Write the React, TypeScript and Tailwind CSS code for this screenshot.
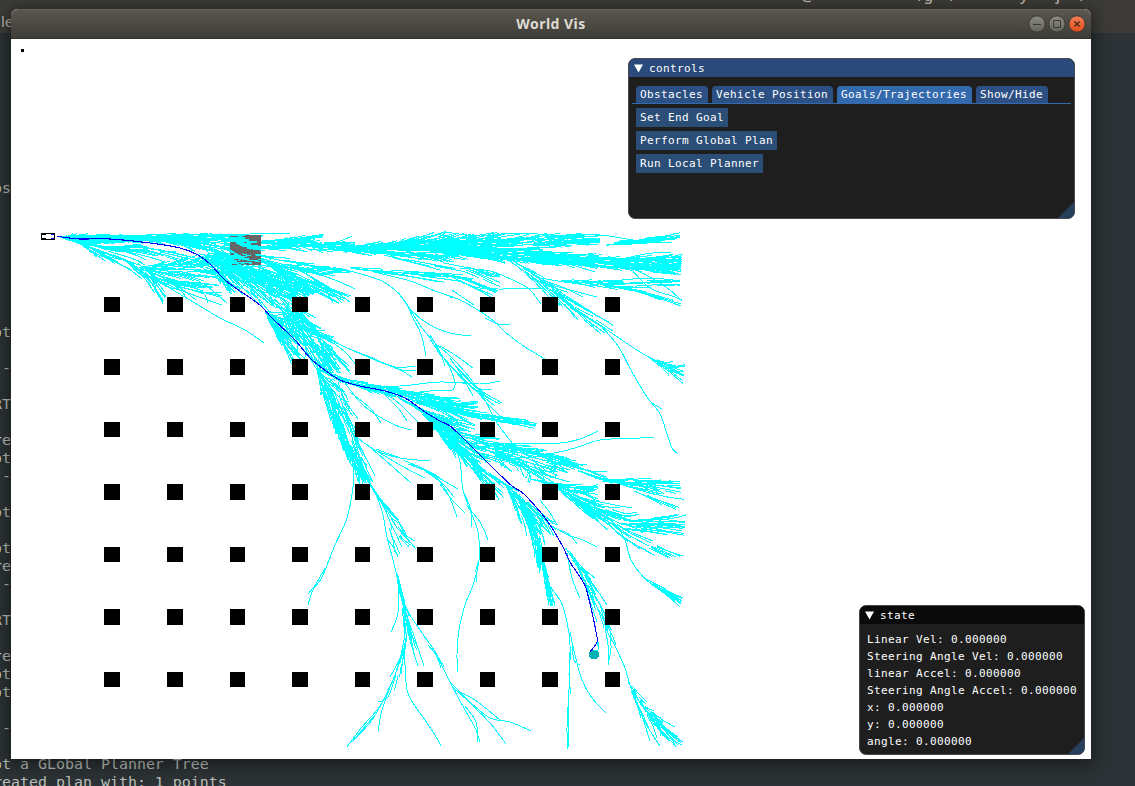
import React from "react";

type Pt = [number, number];

function parse(s: string): Pt[] {
  return s.split(" ").map((p) => p.split(",").map(Number) as Pt);
}

function smooth(p: Pt[]): string {
  let d = `M${p[0][0]} ${p[0][1]}`;
  for (let i = 0; i < p.length - 1; i++) {
    const a = p[i - 1] || p[i];
    const b = p[i];
    const c = p[i + 1];
    const e = p[i + 2] || c;
    d += `C${(b[0] + (c[0] - a[0]) / 6).toFixed(1)} ${(b[1] + (c[1] - a[1]) / 6).toFixed(1)} ${(c[0] - (e[0] - b[0]) / 6).toFixed(1)} ${(c[1] - (e[1] - b[1]) / 6).toFixed(1)} ${c[0]} ${c[1]}`;
  }
  return d;
}

function at(p: Pt[], t: number): Pt {
  const k = Math.min(0.9999, Math.max(0, t)) * (p.length - 1);
  const i = Math.floor(k);
  const f = k - i;
  return [p[i][0] + (p[i + 1][0] - p[i][0]) * f, p[i][1] + (p[i + 1][1] - p[i][1]) * f];
}

let seed = 7;
function rnd() {
  seed = (seed * 1103515245 + 12345) % 2147483648;
  return seed / 2147483648;
}

// Twigs that grow forward and outward between two boundary lines.
function spray(upper: string, lower: string, n: number, len: number): string {
  const u = parse(upper);
  const l = parse(lower);
  const pos = (t: number, v: number): Pt => {
    const a = at(u, t);
    const b = at(l, t);
    return [a[0] + (b[0] - a[0]) * v, a[1] + (b[1] - a[1]) * v];
  };
  let d = "";
  for (let i = 0; i < n; i++) {
    const t0 = rnd() * (1 - len * 0.4);
    const t1 = Math.min(1, t0 + len * (0.3 + rnd() * 0.9));
    const v0 = 0.15 + rnd() * 0.7;
    const v1 = Math.min(1.06, Math.max(-0.06, 0.5 + (v0 - 0.5) * 1.8 + (rnd() - 0.5) * 0.5));
    const a = pos(t0, v0);
    const m = pos((t0 + t1) / 2, v0 + (v1 - v0) * 0.35);
    const b = pos(t1, v1);
    d += `M${a[0].toFixed(1)} ${a[1].toFixed(1)}L${m[0].toFixed(1)} ${m[1].toFixed(1)}L${b[0].toFixed(1)} ${b[1].toFixed(1)}`;
  }
  return d;
}

// Curves that leave one root through a shared control point.
function fan(root: string, ctrl: string, ends: string): string {
  return parse(ends)
    .map((e) => `M${root}Q${ctrl} ${e[0]},${e[1]}`)
    .join("");
}

const SPRAYS: [string, string, number, number][] = [
  ["60,237 75,234 120,235 180,234 230,235 262,237", "60,238 85,246 120,242 160,243 200,251 240,262", 200, 0.22],
  ["75,239 105,246 140,244 180,252 215,262", "80,242 110,252 145,252 180,262 222,272", 24, 0.3],
  ["74,239 100,246 135,258 155,274 166,296", "74,240 95,256 125,268 145,280 163,303", 40, 0.3],
  ["135,267 170,262 205,254 235,256", "137,270 170,276 200,280 230,275", 75, 0.35],
  ["140,268 175,278 200,281 222,287", "145,275 160,290 190,297 222,301", 15, 0.5],
  ["205,250 245,256 290,266 320,291", "205,260 225,276 262,295 300,300", 100, 0.35],
  ["205,250 250,262 290,278 320,291", "205,256 240,272 270,285 298,292", 34, 0.4],
  ["198,252 240,262 265,274 292,290 322,328", "205,260 228,284 260,303 280,318 300,345", 130, 0.22],
  ["212,268 222,276 240,290", "208,268 220,284 232,294", 20, 0.6],
  ["262,308 290,316 330,334 354,374", "266,314 280,336 300,352 322,372", 92, 0.3],
  ["290,300 306,316 324,342 338,370", "280,304 292,328 306,350 322,374", 50, 0.3],
  ["268,316 285,335 305,360", "266,316 278,340 292,364", 32, 0.5],
  ["230,240 290,239 320,241 355,242", "235,250 290,250 320,252 355,252", 95, 0.25],
  ["262,247 285,238 325,233", "262,249 295,246 322,239", 20, 0.7],
  ["240,250 285,258 320,266 350,270", "240,254 285,270 320,276 350,274", 42, 0.35],
  ["265,262 300,274 350,296", "262,262 296,284 340,303", 28, 0.5],
  ["335,246 380,242 440,235 505,234", "335,250 380,256 440,260 505,262", 185, 0.2],
  ["340,248 385,246 430,234 447,232", "340,250 385,250 435,248 460,244", 34, 0.4],
  ["440,235 510,235 560,234 600,237", "440,256 510,254 560,247 600,244", 66, 0.24],
  ["430,245 520,250 600,257 681,258", "430,254 520,262 600,268 681,274", 210, 0.16],
  ["520,250 580,253 630,257 682,255", "520,260 580,264 630,270 682,270", 80, 0.22],
  ["440,240 500,240 560,234 600,236", "440,243 500,242 560,240 600,243", 25, 0.3],
  ["600,242 640,239 680,233", "600,246 640,244 680,238", 16, 0.5],
  ["530,240 560,234 590,234", "530,248 560,246 590,244", 18, 0.5],
  ["350,266 400,270 460,274 498,291", "350,270 400,276 460,284 492,297", 26, 0.35],
  ["380,252 430,258 470,266 500,276", "380,256 430,268 470,276 500,294", 18, 0.4],
  ["560,280 610,280 680,279", "560,282 615,290 680,285", 36, 0.3],
  ["600,282 640,290 681,303", "600,286 640,294 680,308", 14, 0.6],
  ["505,256 540,275 575,298 618,330", "505,258 535,284 565,310 600,334", 38, 0.25],
  ["645,354 685,366", "648,358 682,390", 14, 0.9],
  ["318,366 345,378 385,385 420,393 460,398", "318,370 345,384 380,395 415,402 440,408", 80, 0.25],
  ["400,390 450,406 490,414 537,422", "400,396 450,412 490,421 535,428", 58, 0.3],
  ["410,398 440,400 478,403", "410,402 440,411 475,430", 34, 0.6],
  ["395,395 430,412 476,424", "395,397 430,418 474,432", 38, 0.4],
  ["314,366 342,385 350,410 362,450 372,482", "318,370 322,398 336,430 350,462 360,484", 84, 0.25],
  ["316,366 330,392 344,430 352,460", "316,368 322,396 335,430 350,464", 52, 0.3],
  ["350,440 360,462 369,480", "346,440 354,465 362,482", 34, 0.5],
  ["420,406 455,428 490,438 540,450 585,466", "420,414 440,438 470,460 510,468 535,484", 150, 0.22],
  ["424,410 455,436 480,462 518,492", "424,412 440,438 462,460 500,500", 72, 0.28],
  ["432,424 455,440 475,462", "432,424 447,448 461,470", 14, 0.6],
  ["500,443 535,446 565,458 612,480", "500,450 535,456 565,470 612,483", 44, 0.22],
  ["600,479 640,479 680,482", "600,482 640,488 682,496", 44, 0.4],
  ["615,482 650,488 684,498", "615,484 645,498 682,511", 9, 0.7],
  ["530,478 560,483 598,485", "530,480 565,490 598,500", 36, 0.4],
  ["550,482 590,498 630,513 686,516", "552,486 590,516 620,532 684,534", 92, 0.22],
  ["560,490 600,510 625,528 682,556", "562,494 600,524 630,544 662,558", 26, 0.3],
  ["645,578 683,597", "645,580 680,606", 14, 0.8],
  ["506,482 528,506 543,530 543,552", "506,488 518,515 532,545 540,572", 98, 0.25],
  ["536,530 544,560 555,606", "534,535 542,566 549,606", 26, 0.5],
  ["515,488 535,512 557,528", "515,492 525,516 543,548", 22, 0.45],
  ["526,500 545,515 558,526", "526,502 540,520 552,540", 14, 0.6],
  ["565,545 585,568 600,600 612,630", "565,548 582,578 594,605 605,630", 30, 0.3],
  ["383,500 398,520 414,542", "381,505 386,530 398,556", 10, 0.6],
  ["397,570 404,600 414,625 416,650", "396,575 401,605 405,635 404,650", 22, 0.35],
  ["405,645 402,670 396,690", "405,645 396,670 388,690", 8, 0.5],
  ["628,680 650,705 678,726", "628,685 640,715 650,742", 14, 0.4],
  ["640,700 662,722 682,742", "640,704 656,728 676,747", 32, 0.4],
  ["430,338 442,352 468,384 500,404", "430,340 440,358 468,386 494,406", 8, 0.4],
  ["375,448 400,458 428,470 460,490", "375,450 398,462 426,472 456,488", 6, 0.4],
];

const LINES: string[] = [
  "145,270 170,288 195,303 220,318 245,330 264,343",
  "150,276 180,290 222,305",
  "165,277 200,290 208,303",
  "205,284 214,292 227,303",
  "235,258 260,262 284,268",
  "210,235 250,234 290,234",
  "320,245 340,241 352,236",
  "270,264 310,272 335,280 355,289",
  "350,271 380,280 395,290 406,303 413,318 421,334 426,356",
  "398,292 412,311 430,325 450,333 471,336",
  "406,303 422,328 435,343 450,356 470,378 485,400 497,423 513,444",
  "440,346 458,357 473,368",
  "430,335 440,352 445,366",
  "435,345 450,368 455,383 454,388",
  "450,358 462,376 473,396",
  "456,366 470,382 485,395",
  "460,370 478,388 491,389",
  "462,374 480,390 502,403",
  "478,393 490,406 502,418",
  "374,272 410,281 435,291 460,300 490,318 505,332 525,347 545,359",
  "485,318 498,324 510,325",
  "432,290 452,297 450,298",
  "450,276 475,287 498,289 545,288",
  "460,268 490,271 515,281 530,290 541,304",
  "452,290 474,305",
  "445,232 480,236 520,233 560,236",
  "560,236 600,235 650,242 680,236",
  "505,258 540,282 570,305 600,325 640,352 683,376",
  "540,280 560,286 583,297",
  "548,284 570,290 597,297",
  "600,325 618,346 632,372 647,397 660,414 667,434 672,448 678,454",
  "652,403 662,409",
  "540,278 575,283 610,281 650,278 679,281",
  "600,262 635,270 655,280 670,290 682,301",
  "630,268 650,288 672,296 682,300",
  "610,262 645,254 671,252",
  "320,334 345,347 370,357 395,367 415,366",
  "345,347 375,360 400,370 412,377",
  "385,364 402,370 416,371",
  "320,334 345,352 363,374",
  "322,340 340,360 350,371",
  "328,375 360,385 400,386 440,382 480,384 500,381",
  "360,386 400,393 430,391 452,390 456,383 467,382",
  "345,383 360,402 375,414 395,425 411,430",
  "350,392 370,408 381,423",
  "338,382 345,400 358,419",
  "375,390 395,400 418,422",
  "380,390 398,408 407,421",
  "354,435 375,450 400,458 430,461",
  "350,430 362,450 375,476",
  "365,443 385,460 411,483",
  "375,450 400,465 425,478",
  "425,471 440,482 449,496 457,517",
  "430,472 445,486 454,497",
  "440,484 453,501 465,513",
  "354,465 353,487 347,518 335,545 322,577 313,590 308,605",
  "325,568 316,584 308,594",
  "367,480 377,497 383,515 387,537 393,560 397,577 399,590 403,605 405,625",
  "376,494 395,516 405,535 416,549",
  "385,510 396,518 406,534",
  "388,540 394,548 398,557",
  "398,577 398,612 391,632",
  "403,605 420,630 435,652 450,682 465,710 475,728 480,742",
  "404,610 414,636 424,666",
  "407,615 412,635 417,646",
  "405,615 410,640 418,666",
  "428,645 436,655 441,668",
  "424,636 434,650 444,667",
  "450,682 470,702 490,718 510,722 531,731",
  "455,690 475,700 500,720",
  "452,686 472,705 490,723 506,744",
  "465,706 476,722 478,742",
  "404,610 405,640 405,665 407,690 413,703 425,720 435,735 441,746",
  "404,640 400,658 390,677",
  "402,655 393,680 380,706 362,727 347,747",
  "396,675 388,697 378,702",
  "392,682 382,710 378,731",
  "385,697 372,720 354,740",
  "375,715 362,730 352,742",
  "453,440 460,462 463,490 470,510 478,532 479,560 473,585 465,605 459,630 457,655 458,672",
  "464,493 471,510 472,527",
  "466,505 480,522 488,540",
  "479,560 476,570 477,582",
  "445,430 463,452 478,470",
  "472,443 515,444 560,443 580,439 598,431",
  "495,451 545,454 575,448 600,440 640,438 654,437",
  "500,445 530,452 546,450",
  "490,452 520,463 545,471 557,472",
  "540,453 570,466 590,471 607,472",
  "595,478 620,480 651,478",
  "560,490 590,503 615,524 625,540 632,562 650,583 680,602",
  "600,512 615,530 640,549",
  "590,500 620,506 632,508",
  "545,582 560,600 567,622 570,645 569,690 568,749",
  "545,575 550,586 560,600",
  "570,632 575,655 582,680 592,698 606,713",
  "572,645 574,660 580,665",
  "571,650 569,675 571,694",
  "569,690 567,728 568,749",
  "550,525 568,535 583,540 597,547",
  "560,530 570,535 577,544",
  "540,500 550,513 557,525",
  "567,553 572,578 580,598",
  "572,560 590,580 607,605",
  "570,555 585,570 595,578",
  "585,583 591,604 597,622",
  "597,642 598,650 591,653",
  "588,585 600,605 606,628 616,648 625,668 632,690 647,712 664,734 682,745",
  "605,628 608,645 609,665",
  "610,632 611,648 608,665",
  "607,625 612,635 616,645",
  "628,680 640,710 650,741",
  "632,690 645,722 660,746",
];

const FANS: [string, string, string][] = [
  ["86,245", "130,250", "136,255 157,256 146,260 165,262"],
  ["74,240", "105,255", "115,264 118,262 132,271"],
  ["150,272", "175,282", "186,297 196,300 203,291 212,288"],
  ["295,268", "325,283", "333,303 342,303 350,302 338,298 329,290"],
  ["440,244", "520,247", "545,262 560,266 575,268 595,272"],
  ["620,240", "650,244", "676,233 680,237 672,242"],
  ["368,480", "390,515", "392,530 396,526 399,522"],
  ["524,466", "545,476", "560,487 552,494 570,482"],
];

const TREE =
  SPRAYS.map(([u, l, n, len]) => spray(u, l, n, len)).join("") +
  LINES.map((s) => smooth(parse(s))).join("") +
  FANS.map(([r, c, e]) => fan(r, c, e)).join("");

const PLAN = smooth(
  parse(
    "57,236 62,237 80,239 110,239 150,243 180,248 198,255 210,264 225,280 240,291 260,305 272,318 295,340 310,358 322,368 340,380 360,386 385,391 405,398 425,412 440,421 450,426 462,437 478,453 495,470 512,486 525,495 548,522 563,547 570,562 580,577 586,588 591,608 596,632 597,642 590,652"
  )
);

const COLS = [
  [104, 16], [167, 16], [230, 15], [292, 16], [355, 15], [417, 16], [480, 15], [542, 16], [605, 15],
];
const ROWS = [
  [297, 15], [359, 16], [422, 15], [484, 16], [547, 15], [609, 16], [672, 15],
];

function World() {
  return (
    <svg className="block h-[720px] w-[1080px]" viewBox="11 39 1080 720" shapeRendering="crispEdges">
      <rect x="21" y="49" width="3" height="3" fill="#000" />
      <rect x="230" y="235" width="31" height="30" fill="#666" />
      <path d={TREE} fill="none" stroke="#00ffff" strokeWidth="1" />
      <path
        d="M230 243h5l8 4 8 3 9 2v2h-16l-6-2-8-2zM245 235h16v8h-4v-2h-8v-2h-4zM250 243h11v2h-7zM246 256h15v3h-11zM230 236h8v1h-8zM237 261h6v1h-6zM232 264h5v1h-5zM252 262h9v2h-9z"
        fill="#666"
      />
      {ROWS.map(([y, h]) =>
        COLS.map(([x, w]) => <rect key={`${x}-${y}`} x={x} y={y} width={w} height={h} fill="#000" />)
      )}
      <circle cx="594" cy="654.5" r="5" fill="#00afaf" />
      <path d="M594 651l4-1v-8" fill="none" stroke="#00ffff" />
      <path d={PLAN} fill="none" stroke="#0000ff" strokeWidth="1.1" />
      <path d="M41 233h14v7h-14zM42 234v5h12v-5z" fill="#000" fillRule="evenodd" />
      <path d="M42 234h4v1h-4zM42 238h4v1h-4z" fill="#000" />
      <path d="M51 234h3v1h-3zM51 238h3v1h-3z" fill="#00f" />
    </svg>
  );
}

function PanelTitle({ text, className }: { text: string; className: string }) {
  return (
    <div className={`flex h-[18px] shrink-0 items-center gap-[6px] pl-[5px] ${className}`}>
      <svg className="h-[9px] w-[9px]" viewBox="0 0 9 9">
        <path d="M0 0.5h9L4.5 8.5z" fill="#fff" />
      </svg>
      <span>{text}</span>
    </div>
  );
}

function Grip() {
  return (
    <svg className="absolute right-0 bottom-0 h-4 w-4" viewBox="0 0 16 16">
      <path d="M16 0v16H0z" fill="#263f5d" />
    </svg>
  );
}

const TABS: [string, string][] = [
  ["Obstacles", "w-[72px] bg-[#2c5083]"],
  ["Vehicle Position", "w-[121px] bg-[#2c5083]"],
  ["Goals/Trajectories", "w-[135px] bg-[#3369ad]"],
  ["Show/Hide", "w-[72px] bg-[#2c5083]"],
];

const STATE = [
  "Linear Vel: 0.000000",
  "Steering Angle Vel: 0.000000",
  "linear Accel: 0.000000",
  "Steering Angle Accel: 0.000000",
  "x: 0.000000",
  "y: 0.000000",
  "angle: 0.000000",
];

const PANEL =
  "absolute flex flex-col overflow-hidden rounded-[7px] border border-[#48484f] bg-[#1e1e1e] font-['DejaVu_Sans_Mono',monospace] text-[11px] tracking-[0.378px] leading-[17px] whitespace-pre text-white";

function Controls() {
  return (
    <section className={`${PANEL} top-[49px] left-[617px] h-[161px] w-[447px]`}>
      <PanelTitle text="controls" className="bg-[#294a7a]" />
      <div className="mx-[3px] mt-[9px] flex h-[18px] shrink-0 gap-1 border-b border-[#3369ad] pl-1">
        {TABS.map(([t, c]) => (
          <button key={t} className={`h-[17px] rounded-t-[4px] pl-1 text-left leading-[18px] ${c}`}>
            {t}
          </button>
        ))}
      </div>
      <div className="mt-1 flex flex-col items-start gap-1 pl-[7px]">
        {["Set End Goal", "Perform Global Plan", "Run Local Planner"].map((t) => (
          <button key={t} className="h-[19px] bg-[#2b4e77] px-1 leading-[20px]">
            {t}
          </button>
        ))}
      </div>
      <Grip />
    </section>
  );
}

function State() {
  return (
    <section className={`${PANEL} top-[596px] left-[848px] h-[150px] w-[226px]`}>
      <PanelTitle text="state" className="bg-[#0a0a0a]" />
      <div className="mt-[7px] pl-[7px]">
        {STATE.map((t) => (
          <p key={t}>{t}</p>
        ))}
      </div>
      <Grip />
    </section>
  );
}

const LOG = [
  "Pos", "", "", "", "", "", "", "", "Got", "", "  -", "", "RRT", "", "Cre", "Got", "  -", "", "Got", "", "Got", "Cre", "  -", "",
  "RRT", "", "Cre", "Got", "Got", "", "  -", "", "Got a GLobal Planner Tree", "Created plan with: 1 points",
];

export default function App() {
  return (
    <div className="relative h-[786px] w-[1135px] overflow-hidden bg-[#2c3235]">
      <div className="relative h-[33px] overflow-hidden bg-[#3c3b37] font-['Noto_Sans',sans-serif] text-[#b9b8b0]">
        <span className="absolute top-[11px] left-[1px] text-[15px] leading-[20px]">le</span>
        <div className="absolute top-[-15px] left-[801px] flex text-[15px] leading-[20px] font-medium">
          <span className="w-[117px]">@</span>
          <span className="w-[32px]">/g</span>
          <span className="w-[70px]">/</span>
          <span className="w-[36px]">y</span>
          <span className="w-[24px]">j</span>
          <span>/</span>
        </div>
      </div>
      <div className="mt-[146px] -ml-4 font-['DejaVu_Sans_Mono',monospace] text-[14.95px] leading-[18px] whitespace-pre text-[#b9bfb8]">
        {LOG.map((t, i) => (
          <p key={i} className="h-[18px]">
            {t}
          </p>
        ))}
      </div>
      <main className="absolute top-[9px] left-[11px] h-[750px] w-[1080px] rounded-t-[7px] bg-white shadow-[0_3px_16px_3px_rgba(0,0,0,0.45)]">
        <header className="flex h-[30px] items-center rounded-t-[7px] border-t border-[#66645a] border-b border-b-[#34332f] bg-linear-to-b from-[#59574e] to-[#3d3c37]">
          <div className="w-[70px]" />
          <h1 className="flex-1 text-center font-['Noto_Sans',sans-serif] text-[14px] leading-[20px] font-bold tracking-[0.45px] text-[#dfdbd2]">
            World Vis
          </h1>
          <div className="flex w-[70px] justify-end pr-[5px]">
            <svg className="h-[18px] w-[58px]" viewBox="0 0 58 18">
              <defs>
                <linearGradient id="g" x2="0" y2="1">
                  <stop stopColor="#8a8982" />
                  <stop offset="1" stopColor="#64635c" />
                </linearGradient>
                <linearGradient id="o" x2="0" y2="1">
                  <stop stopColor="#f38059" />
                  <stop offset="1" stopColor="#e04a16" />
                </linearGradient>
              </defs>
              <circle cx="9" cy="9" r="8.2" fill="url(#g)" stroke="#383732" />
              <circle cx="29" cy="9" r="8.2" fill="url(#g)" stroke="#383732" />
              <circle cx="49" cy="9" r="8.2" fill="url(#o)" stroke="#383732" />
              <path d="M5 9.5h8M25.5 5.5h7v7h-7z" fill="none" stroke="#3b3a35" />
              <path d="M46.4 6.4l5.2 5.2M51.6 6.4l-5.2 5.2" stroke="#4a2a1a" strokeWidth="1.4" />
            </svg>
          </div>
        </header>
        <World />
        <Controls />
        <State />
      </main>
    </div>
  );
}
